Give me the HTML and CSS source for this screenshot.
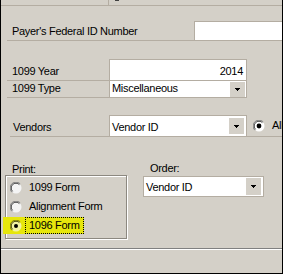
FILE: index.html
```html
<!DOCTYPE html>
<html lang="en">

<head>
  <meta charset="UTF-8" />
  <title>1099 Forms</title>
  <link rel="stylesheet" href="styles.css">
</head>

<body>
  <section class="window">
    <div class="top-strip">
      <div class="top-tab"></div>
      <div class="top-mark"></div>
    </div>

    <div class="row payer">
      <label class="label">Payer's Federal ID Number</label>
      <div class="edit payer-edit"></div>
    </div>

    <div class="row year">
      <label class="label">1099 Year</label>
      <div class="edit year-edit"><span class="value">2014</span></div>
    </div>

    <div class="row type">
      <label class="label">1099 Type</label>
      <div class="combo type-combo">
        <span class="combo-text">Miscellaneous</span>
        <span class="combo-btn"><svg width="5" height="3" shape-rendering="crispEdges"><path d="M0 0h5v1H0zM1 1h3v1H1zM2 2h1v1H2z" fill="#000"/></svg></span>
      </div>
    </div>

    <div class="row vendors">
      <label class="label">Vendors</label>
      <div class="combo vendors-combo">
        <span class="combo-text">Vendor ID</span>
        <span class="combo-btn"><svg width="5" height="3" shape-rendering="crispEdges"><path d="M0 0h5v1H0zM1 1h3v1H1zM2 2h1v1H2z" fill="#000"/></svg></span>
      </div>
      <div class="radio vendors-all">
        <svg class="radio-dot" width="12" height="12" viewBox="0 0 12 12">
          <circle cx="6" cy="6" r="5.5" fill="#fff" />
          <path d="M1.8 10.2A5.5 5.5 0 0 1 10.2 1.8" stroke="#808080" fill="none" />
          <path d="M2.6 9.4A4.5 4.5 0 0 1 9.4 2.6" stroke="#404040" fill="none" />
          <circle cx="6" cy="6" r="2.4" fill="#000" />
        </svg>
        <span class="radio-text">All</span>
      </div>
    </div>

    <div class="print-area">
      <div class="print-col">
        <div class="caption">Print:</div>
        <div class="group">
          <div class="radio">
            <svg class="radio-dot" width="12" height="12" viewBox="0 0 12 12">
              <circle cx="6" cy="6" r="5.5" fill="#f4f4f4" />
              <path d="M1.8 10.2A5.5 5.5 0 0 1 10.2 1.8" stroke="#808080" fill="none" />
              <path d="M2.6 9.4A4.5 4.5 0 0 1 9.4 2.6" stroke="#404040" fill="none" />
            </svg>
            <span class="radio-text">1099 Form</span>
          </div>
          <div class="radio">
            <svg class="radio-dot" width="12" height="12" viewBox="0 0 12 12">
              <circle cx="6" cy="6" r="5.5" fill="#f4f4f4" />
              <path d="M1.8 10.2A5.5 5.5 0 0 1 10.2 1.8" stroke="#808080" fill="none" />
              <path d="M2.6 9.4A4.5 4.5 0 0 1 9.4 2.6" stroke="#404040" fill="none" />
            </svg>
            <span class="radio-text">Alignment Form</span>
          </div>
          <div class="radio marked">
            <svg class="radio-dot" width="12" height="12" viewBox="0 0 12 12">
              <circle cx="6" cy="6" r="5.5" fill="#f4f4a0" />
              <path d="M1.8 10.2A5.5 5.5 0 0 1 10.2 1.8" stroke="#808000" fill="none" />
              <path d="M2.6 9.4A4.5 4.5 0 0 1 9.4 2.6" stroke="#404000" fill="none" />
              <circle cx="6" cy="6" r="2" fill="#000" />
            </svg>
            <span class="radio-text focus">1096 Form</span>
          </div>
        </div>
      </div>

      <div class="order-col">
        <div class="caption">Order:</div>
        <div class="combo order-combo">
          <span class="combo-text">Vendor ID</span>
          <span class="combo-btn"><svg width="5" height="3" shape-rendering="crispEdges"><path d="M0 0h5v1H0zM1 1h3v1H1zM2 2h1v1H2z" fill="#000"/></svg></span>
        </div>
      </div>
    </div>

    <div class="separator"></div>
  </section>
</body>

</html>
```

FILE: styles.css
```css
body {
  margin: 0;
  font-family: "Liberation Sans", Arial, sans-serif;
  font-size: 11px;
  letter-spacing: -0.3px;
  color: #000;
}

.window {
  width: 283px;
  height: 274px;
  box-sizing: border-box;
  background: #d4d0c8;
  border-left: 1px solid #000;
  border-right: 1px solid #000;
  border-bottom: 1px solid #000;
  overflow: hidden;
}

.top-strip {
  height: 5px;
  border-bottom: 1px solid #b4ada2;
  display: flex;
}

.top-tab {
  margin-left: 107px;
  border-right: 1px solid #b4ada2;
}

.top-mark {
  margin-left: 6px;
  width: 4px;
  height: 1px;
  background: #404040;
}

.row {
  display: flex;
}

.row > * {
  flex: none;
}

.label {
  display: flex;
  align-items: flex-end;
  box-sizing: border-box;
  padding: 0 0 2px 5px;
  line-height: 13px;
  white-space: nowrap;
}

.payer {
  margin: 15px 0 0 6px;
  height: 20px;
  box-sizing: border-box;
  border-bottom: 1px solid #b4ada2;
}

.payer-edit {
  margin-left: auto;
  width: 88px;
  background: #fff;
  border-top: 1px solid #b4ada2;
  border-left: 1px solid #b4ada2;
}

.edit {
  box-sizing: border-box;
}

.year {
  margin: 18px 0 0 6px;
}

.year .label,
.type .label {
  width: 102px;
  border-bottom: 1px solid #b4ada2;
}

.year .label {
  height: 22px;
}

.year-edit {
  width: 138px;
  height: 22px;
  background: #fff;
  border: 1px solid #b4ada2;
  display: flex;
  align-items: flex-end;
  justify-content: flex-end;
  padding: 0 3px 2px 0;
  line-height: 13px;
}

.type {
  margin: -1px 0 0 6px;
}

.type .label {
  height: 18px;
}

.combo {
  display: flex;
  box-sizing: border-box;
  background: #fff;
  border: 1px solid #b4ada2;
  line-height: 13px;
}

.combo-text {
  flex: 1;
  align-self: flex-end;
  padding: 0 0 2px 2px;
  white-space: nowrap;
}

.combo-btn {
  width: 15px;
  margin: 1px 1px 0 0;
  background: #d4d0c8;
  display: flex;
  align-items: center;
  justify-content: center;
}

.combo-btn svg {
  display: block;
}

.type-combo {
  width: 138px;
  height: 18px;
}

.vendors {
  margin: 17px 0 0 9px;
  height: 22px;
  box-sizing: border-box;
  border-bottom: 1px solid #b4ada2;
}

.vendors .label {
  width: 99px;
  padding-left: 3px;
}

.vendors-combo {
  width: 138px;
  height: 21px;
  border-bottom: none;
}

.vendors-combo .combo-btn {
  margin: 2px 2px 2px 0;
}

.radio {
  display: flex;
  align-items: center;
  height: 19px;
  white-space: nowrap;
}

.radio-dot {
  flex: none;
  display: block;
}

.radio-text {
  margin-left: 3px;
  padding: 0 3px;
  line-height: 15px;
  border: 1px dotted transparent;
}

.vendors-all {
  margin-left: 6px;
  height: 21px;
}

.print-area {
  display: flex;
  margin: 26px 0 0 4px;
}

.caption {
  height: 12px;
  line-height: 13px;
  padding-left: 7px;
}

.group {
  width: 122px;
  height: 64px;
  box-sizing: border-box;
  border: 1px solid #8c8880;
  box-shadow: 1px 1px 0 #fff, inset 1px 1px 0 #fff;
  padding: 2px 0 0 4px;
}

.radio.marked {
  height: 17px;
  margin: 1px 0 0 -7px;
  padding-left: 7px;
  width: fit-content;
  background: #e6e60c;
}

.focus {
  border-color: #000;
}

.order-col {
  margin-left: 16px;
}

.order-col .caption {
  height: 14px;
  margin-top: -1px;
  padding-left: 7px;
}

.order-combo {
  width: 121px;
  height: 21px;
}

.order-combo .combo-btn {
  margin: 1px 2px 1px 0;
}

.separator {
  margin-top: 9px;
  height: 1px;
  border-top: 1px solid #808080;
  background: #fff;
}
```
